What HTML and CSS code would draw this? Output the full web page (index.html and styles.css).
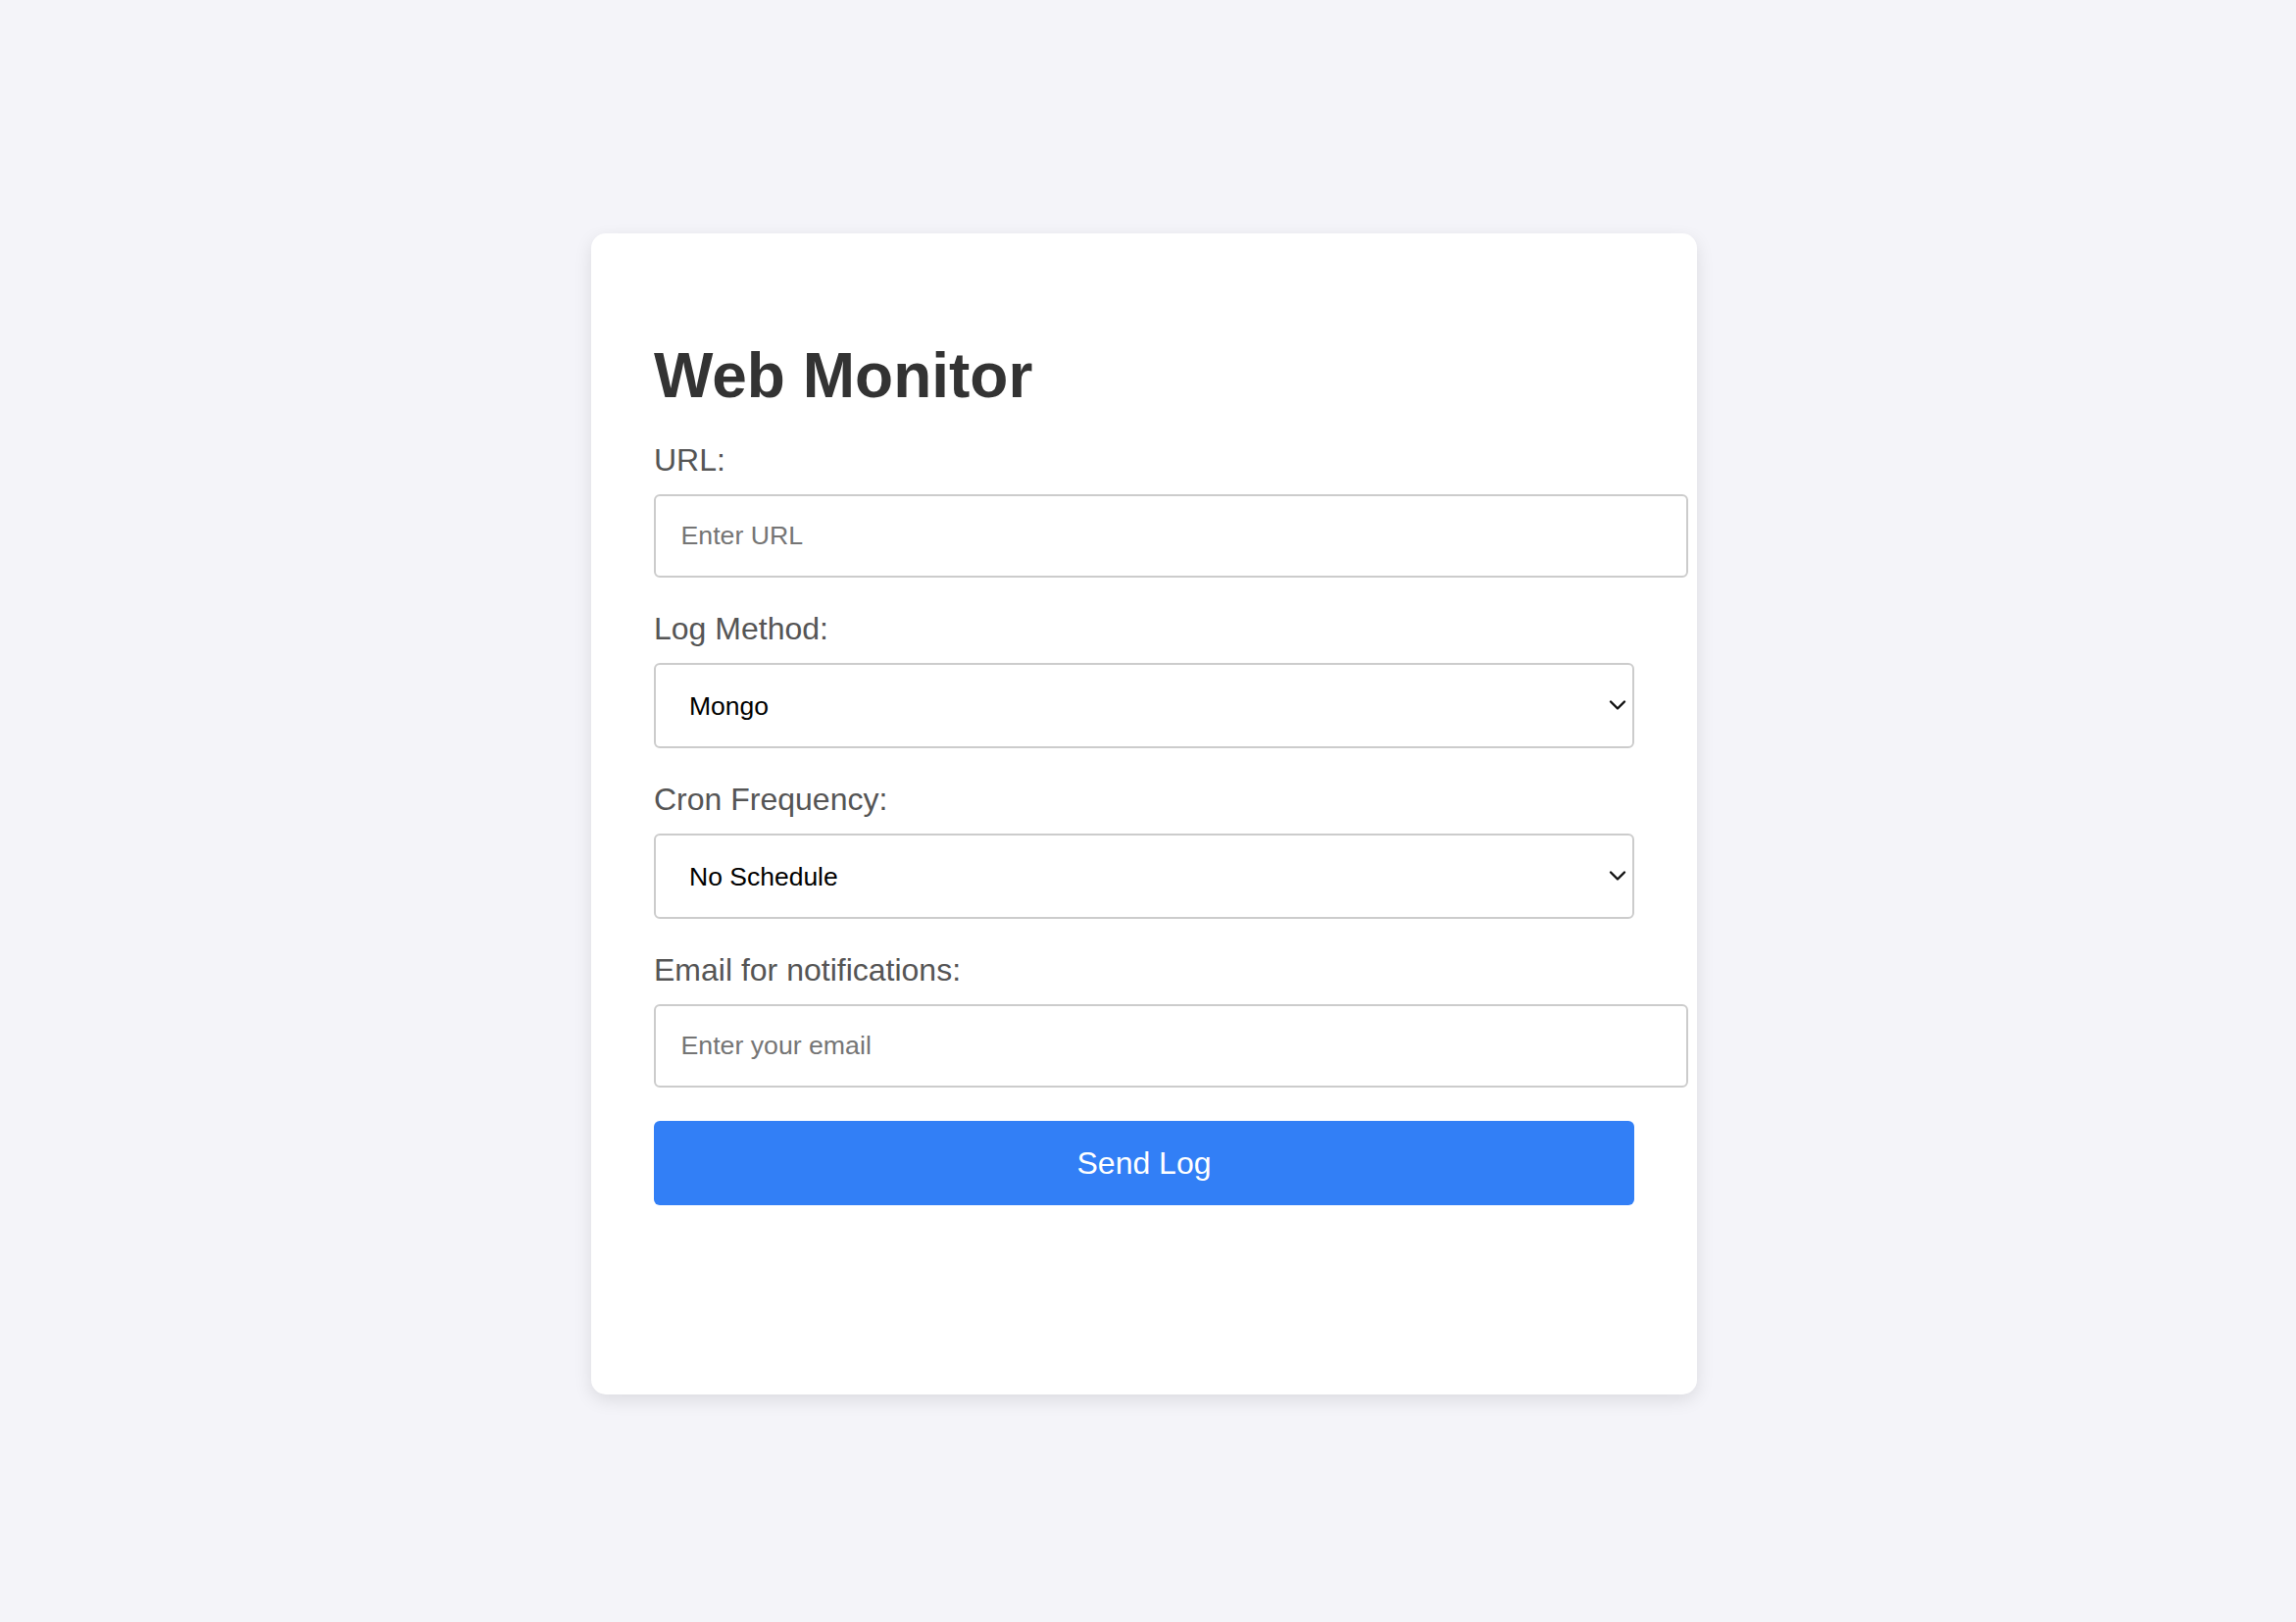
FILE: index.html
```html
<!DOCTYPE html>
<html lang="en">
<head>
<meta charset="utf-8">
<title>Web Monitor</title>
<link rel="stylesheet" href="styles.css">
</head>
<body>
  <div class="card">
    <h1 class="title">Web Monitor</h1>
    <form class="form">
      <label class="label" for="url">URL:</label>
      <input class="text-input" id="url" type="text" placeholder="Enter URL">

      <label class="label" for="method">Log Method:</label>
      <div class="select-wrap">
        <select class="select" id="method">
          <option>Mongo</option>
        </select>
        <svg class="chevron" width="18" height="12" viewBox="0 0 18 12"><polyline points="2,2.5 9,9.5 16,2.5" fill="none" stroke="#111" stroke-width="2.4" stroke-linecap="round" stroke-linejoin="round"/></svg>
      </div>

      <label class="label" for="cron">Cron Frequency:</label>
      <div class="select-wrap">
        <select class="select" id="cron">
          <option>No Schedule</option>
        </select>
        <svg class="chevron" width="18" height="12" viewBox="0 0 18 12"><polyline points="2,2.5 9,9.5 16,2.5" fill="none" stroke="#111" stroke-width="2.4" stroke-linecap="round" stroke-linejoin="round"/></svg>
      </div>

      <label class="label" for="email">Email for notifications:</label>
      <input class="text-input" id="email" type="email" placeholder="Enter your email">

      <button class="button" type="button">Send Log</button>
    </form>
  </div>
</body>
</html>
```

FILE: styles.css
```css
html, body {
  margin: 0;
  padding: 0;
}

body {
  background: #f4f4f9;
  font-family: "Liberation Sans", Arial, Helvetica, sans-serif;
  min-height: 100vh;
  box-sizing: border-box;
  display: flex;
  justify-content: center;
  align-items: center;
  padding: 6px 8px 0 0;
}

.card {
  background: #ffffff;
  width: 1000px;
  padding: 64px 64px 193px 64px;
  border-radius: 15px;
  box-shadow: 0 6px 18px rgba(0, 0, 0, 0.1);
}

.title {
  margin: 44px 0 31px 0;
  font-size: 64px;
  line-height: 74px;
  font-weight: bold;
  color: #333333;
}

.form {
  display: flex;
  flex-direction: column;
  align-items: flex-start;
}

.label {
  display: block;
  font-size: 32px;
  line-height: 36px;
  color: #555555;
  margin-bottom: 17px;
}

.text-input {
  display: block;
  width: 100%;
  box-sizing: content-box;
  padding: 25px 25.5px;
  border: 2px solid #cccccc;
  border-radius: 6px;
  font-family: "Liberation Sans", Arial, Helvetica, sans-serif;
  font-size: 26.7px;
  line-height: 31px;
  color: #000;
  background: #fff;
  margin: 0 0 34px 0;
  outline: none;
}

.text-input::placeholder {
  color: #757575;
}

.select-wrap {
  position: relative;
  width: 100%;
  margin-bottom: 34px;
}

.select {
  display: block;
  width: 100%;
  height: 87px;
  box-sizing: border-box;
  -webkit-appearance: none;
  appearance: none;
  padding: 0 44px 0 34px;
  border: 2px solid #cccccc;
  border-radius: 6px;
  background: #ffffff;
  font-family: "Liberation Sans", Arial, Helvetica, sans-serif;
  font-size: 26.5px;
  color: #000000;
  margin: 0;
  outline: none;
}

.chevron {
  position: absolute;
  right: 8px;
  top: 37px;
  pointer-events: none;
}

.button {
  display: block;
  width: 100%;
  height: 86px;
  border: none;
  border-radius: 6px;
  background: #327ff6;
  color: #ffffff;
  font-family: "Liberation Sans", Arial, Helvetica, sans-serif;
  font-size: 32px;
  margin: 0;
  padding: 0;
  cursor: pointer;
}
```
